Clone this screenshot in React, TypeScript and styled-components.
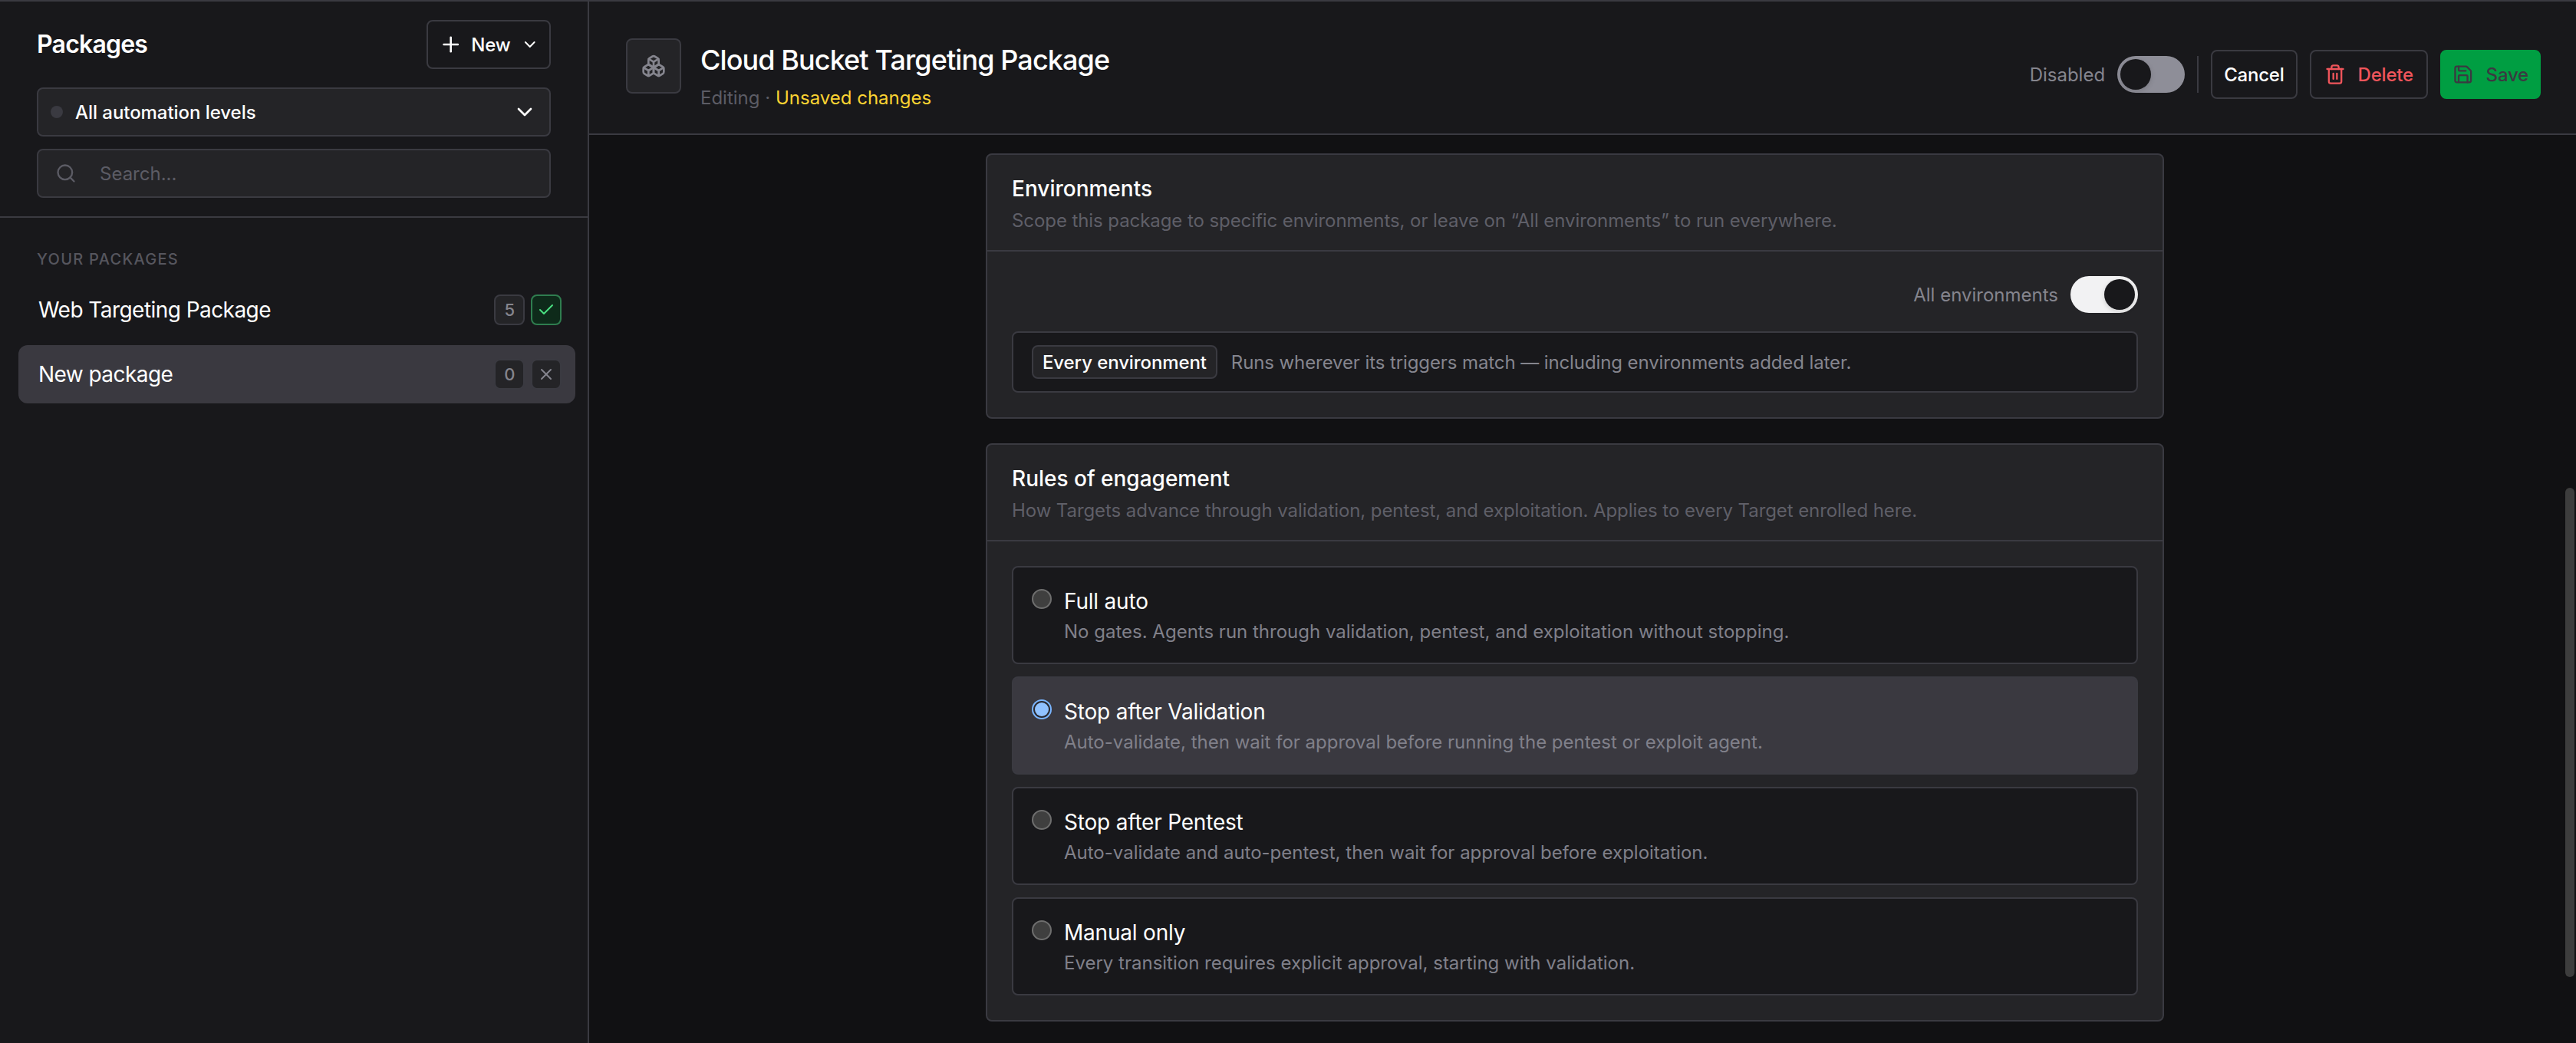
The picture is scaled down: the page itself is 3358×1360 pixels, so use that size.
import { Boxes, Check, ChevronDown, Plus, Save, Search, Trash2, X } from "lucide-react";
import styled, { createGlobalStyle } from "styled-components";

const GlobalStyle = createGlobalStyle`
    html, body {
        margin: 0;
        padding: 0;
        background: #111113;
    }
    * {
        box-sizing: border-box;
    }
    body {
        font-family: Inter, "Liberation Sans", sans-serif;
        color: #ffffff;
        -webkit-font-smoothing: antialiased;
    }
`;

const Shell = styled.div`
    display: flex;
    height: 100vh;
    border-top: 2px solid #3a3a41;
    overflow: hidden;
`;

const Sidebar = styled.aside`
    flex: 0 0 768px;
    background: #18181b;
    border-right: 2px solid #3a3a41;
`;

const SidebarHead = styled.div`
    display: flex;
    flex-direction: column;
    gap: 16px;
    padding: 24px 48px 24px;
    border-bottom: 2px solid #3a3a41;
`;

const TitleRow = styled.div`
    display: flex;
    align-items: center;
    justify-content: space-between;
    margin-bottom: 8px;
`;

const SidebarTitle = styled.h1`
    margin: 0;
    font-size: 32px;
    line-height: 40px;
    font-weight: 600;
    letter-spacing: -0.8px;
`;

const OutlineButton = styled.button<{ $tone?: string }>`
    display: inline-flex;
    align-items: center;
    height: 64px;
    padding: 0 15px;
    gap: 16px;
    background: transparent;
    border: 2px solid #3a3a41;
    border-radius: 8px;
    color: ${(p) => p.$tone ?? "#ffffff"};
    font-family: inherit;
    font-size: 24px;
    font-weight: 500;
    letter-spacing: -0.2px;
`;

const NewButton = styled(OutlineButton)`
    width: 162px;
    padding: 0 14px;
    gap: 0;
`;

const NewLabel = styled.span`
    margin: 0 13px 0 11px;
`;

const DeleteButton = styled(OutlineButton)`
    padding: 0 17px;
`;

const SelectBox = styled.div`
    display: flex;
    align-items: center;
    height: 64px;
    padding: 0 16px;
    background: #242427;
    border: 2px solid #3a3a41;
    border-radius: 8px;
    font-size: 24px;
    font-weight: 500;
    letter-spacing: -0.05px;
`;

const LevelDot = styled.span`
    width: 16px;
    height: 16px;
    margin-right: 16px;
    border-radius: 50%;
    background: #3a3a41;
`;

const SelectLabel = styled.span`
    flex: 1;
`;

const SearchBox = styled.div`
    display: flex;
    align-items: center;
    gap: 30px;
    height: 64px;
    padding: 0 22px;
    background: #242427;
    border: 2px solid #3a3a41;
    border-radius: 8px;
    color: #5c5c65;
    font-size: 24px;
`;

const PackageList = styled.div`
    display: flex;
    flex-direction: column;
    gap: 8px;
    padding: 38px 16px 0 24px;
`;

const ListHeading = styled.div`
    padding: 0 24px 4px;
    color: #56565e;
    font-size: 20px;
    line-height: 32px;
    font-weight: 500;
    letter-spacing: 1.3px;
    text-transform: uppercase;
`;

const PackageRow = styled.div<{ $active?: boolean }>`
    display: flex;
    align-items: center;
    height: 76px;
    padding: 0 18px 0 26px;
    border-radius: 12px;
    background: ${(p) => (p.$active ? "#3a3940" : "transparent")};
    font-size: 28px;
    font-weight: 400;
    letter-spacing: -0.55px;
`;

const PackageName = styled.span`
    flex: 1;
`;

const Chip = styled.span<{ $ok?: boolean }>`
    display: inline-flex;
    align-items: center;
    justify-content: center;
    width: 40px;
    height: 40px;
    margin-left: 8px;
    border-radius: 8px;
    border: 2px solid ${(p) => (p.$ok ? "#2f7d4f" : "#3a3a41")};
    background: ${(p) => (p.$ok ? "#0e2a1a" : "#242427")};
    color: ${(p) => (p.$ok ? "#4ade80" : "#85858e")};
    font-size: 22px;
    font-weight: 500;
`;

const Main = styled.main`
    flex: 1;
    position: relative;
    display: flex;
    flex-direction: column;
    min-width: 0;
`;

const Header = styled.header`
    display: flex;
    align-items: center;
    padding: 48px 46px 30px 48px;
    background: #18181b;
    border-bottom: 2px solid #3a3a41;
`;

const IconBox = styled.div`
    display: flex;
    align-items: center;
    justify-content: center;
    align-self: flex-start;
    width: 72px;
    height: 72px;
    border: 2px solid #3a3a41;
    border-radius: 8px;
    background: #242427;
    color: #85858e;
`;

const HeaderText = styled.div`
    flex: 1;
    margin-left: 25px;
`;

const PageTitle = styled.h2`
    margin: 0 0 6px;
    font-size: 36px;
    line-height: 56px;
    font-weight: 500;
    letter-spacing: -0.9px;
`;

const PageSub = styled.div`
    font-size: 24px;
    line-height: 32px;
    color: #5c5c65;
`;

const Unsaved = styled.span`
    color: #fbd332;
`;

const Actions = styled.div`
    display: flex;
    align-items: center;
    gap: 16px;
`;

const ToggleLabel = styled.span`
    color: #85858e;
    font-size: 24px;
`;

const Toggle = styled.span<{ $on?: boolean }>`
    display: flex;
    justify-content: ${(p) => (p.$on ? "flex-end" : "flex-start")};
    align-items: center;
    width: 88px;
    height: 48px;
    padding: 0 4px;
    border-radius: 24px;
    background: ${(p) => (p.$on ? "#f2f2f3" : "#8e8e98")};
`;

const ToggleThumb = styled.span`
    width: 40px;
    height: 40px;
    border-radius: 50%;
    background: #18181b;
    box-shadow: 0 2px 6px rgba(0, 0, 0, 0.15);
`;

const Divider = styled.span`
    width: 2px;
    height: 48px;
    background: #3a3a41;
`;

const SaveButton = styled(OutlineButton)`
    width: 131px;
    padding: 0 14px;
    background: #009e42;
    border-color: #009e42;
    color: #3a3a41;
`;

const Content = styled.div`
    flex: 1;
    display: flex;
    flex-direction: column;
    gap: 32px;
    padding: 24px 20px 0 0;
    align-items: center;
    overflow: hidden;
`;

const Card = styled.section`
    flex: none;
    width: 1536px;
    background: #242427;
    border: 2px solid #3a3a41;
    border-radius: 8px;
`;

const CardHead = styled.div`
    padding: 24px 32px 20px;
    border-bottom: 2px solid #3a3a41;
`;

const CardTitle = styled.h3`
    margin: 0 0 4px;
    font-size: 28px;
    line-height: 40px;
    font-weight: 500;
`;

const CardDesc = styled.p`
    margin: 0;
    color: #5f5f68;
    font-size: 24px;
    line-height: 36px;
    letter-spacing: -0.08px;
`;

const CardBody = styled.div`
    display: flex;
    flex-direction: column;
    padding: 32px;
`;

const ToggleRow = styled.div`
    display: flex;
    align-items: center;
    justify-content: flex-end;
    gap: 16px;
    margin-bottom: 24px;
`;

const Notice = styled.div`
    display: flex;
    align-items: center;
    gap: 18px;
    height: 80px;
    padding: 0 24px;
    background: #18181b;
    border: 2px solid #3a3a41;
    border-radius: 8px;
    color: #85858e;
    font-size: 24px;
    letter-spacing: -0.1px;
`;

const Pill = styled.span`
    display: inline-flex;
    align-items: center;
    height: 44px;
    padding: 0 12px;
    background: #242427;
    border: 2px solid #3a3a41;
    border-radius: 8px;
    color: #ffffff;
    font-weight: 500;
`;

const OptionList = styled.div`
    display: flex;
    flex-direction: column;
    gap: 16px;
`;

const Option = styled.div<{ $selected?: boolean }>`
    display: flex;
    height: 128px;
    padding: 24px;
    gap: 16px;
    background: ${(p) => (p.$selected ? "#3a3940" : "#18181b")};
    border: 2px solid #3a3a41;
    border-radius: 8px;
`;

const Radio = styled.span<{ $selected?: boolean }>`
    flex: none;
    display: flex;
    align-items: center;
    justify-content: center;
    width: 26px;
    height: 26px;
    margin-top: 4px;
    border-radius: 50%;
    border: 2px solid ${(p) => (p.$selected ? "#7ab5ff" : "#6e6e6e")};
    background: ${(p) => (p.$selected ? "#2a2a30" : "#3f3f3f")};
`;

const RadioDot = styled.span`
    width: 18px;
    height: 18px;
    border-radius: 50%;
    background: #90c2ff;
`;

const OptionTitle = styled.div`
    font-size: 28px;
    line-height: 40px;
    font-weight: 400;
    letter-spacing: -0.2px;
`;

const OptionDesc = styled.div`
    margin-top: 4px;
    color: #80808a;
    font-size: 24px;
    line-height: 32px;
`;

const ScrollThumb = styled.div`
    position: absolute;
    right: 2px;
    top: 634px;
    width: 12px;
    height: 638px;
    border-radius: 6px;
    background: #3d3d3d;
`;

const options = [
    {
        title: "Full auto",
        desc: "No gates. Agents run through validation, pentest, and exploitation without stopping.",
    },
    {
        title: "Stop after Validation",
        desc: "Auto-validate, then wait for approval before running the pentest or exploit agent.",
        selected: true,
    },
    {
        title: "Stop after Pentest",
        desc: "Auto-validate and auto-pentest, then wait for approval before exploitation.",
    },
    {
        title: "Manual only",
        desc: "Every transition requires explicit approval, starting with validation.",
    },
];

export default function App() {
    return (
        <>
            <GlobalStyle />
            <Shell>
                <Sidebar>
                    <SidebarHead>
                        <TitleRow>
                            <SidebarTitle>Packages</SidebarTitle>
                            <NewButton>
                                <Plus size={32} />
                                <NewLabel>New</NewLabel>
                                <ChevronDown size={24} />
                            </NewButton>
                        </TitleRow>
                        <SelectBox>
                            <LevelDot />
                            <SelectLabel>All automation levels</SelectLabel>
                            <ChevronDown size={32} />
                        </SelectBox>
                        <SearchBox>
                            <Search size={28} />
                            <span>Search...</span>
                        </SearchBox>
                    </SidebarHead>
                    <PackageList>
                        <ListHeading>Your packages</ListHeading>
                        <PackageRow>
                            <PackageName>Web Targeting Package</PackageName>
                            <Chip>5</Chip>
                            <Chip $ok>
                                <Check size={24} />
                            </Chip>
                        </PackageRow>
                        <PackageRow $active>
                            <PackageName>New package</PackageName>
                            <Chip>0</Chip>
                            <Chip>
                                <X size={24} />
                            </Chip>
                        </PackageRow>
                    </PackageList>
                </Sidebar>
                <Main>
                    <Header>
                        <IconBox>
                            <Boxes size={32} />
                        </IconBox>
                        <HeaderText>
                            <PageTitle>Cloud Bucket Targeting Package</PageTitle>
                            <PageSub>
                                Editing · <Unsaved>Unsaved changes</Unsaved>
                            </PageSub>
                        </HeaderText>
                        <Actions>
                            <ToggleLabel>Disabled</ToggleLabel>
                            <Toggle>
                                <ToggleThumb />
                            </Toggle>
                            <Divider />
                            <OutlineButton>Cancel</OutlineButton>
                            <DeleteButton $tone="#f0555b">
                                <Trash2 size={28} />
                                Delete
                            </DeleteButton>
                            <SaveButton>
                                <Save size={28} />
                                Save
                            </SaveButton>
                        </Actions>
                    </Header>
                    <Content>
                        <Card>
                            <CardHead>
                                <CardTitle>Environments</CardTitle>
                                <CardDesc>
                                    Scope this package to specific environments, or leave on “All environments” to run everywhere.
                                </CardDesc>
                            </CardHead>
                            <CardBody>
                                <ToggleRow>
                                    <ToggleLabel>All environments</ToggleLabel>
                                    <Toggle $on>
                                        <ToggleThumb />
                                    </Toggle>
                                </ToggleRow>
                                <Notice>
                                    <Pill>Every environment</Pill>
                                    Runs wherever its triggers match — including environments added later.
                                </Notice>
                            </CardBody>
                        </Card>
                        <Card>
                            <CardHead>
                                <CardTitle>Rules of engagement</CardTitle>
                                <CardDesc>
                                    How Targets advance through validation, pentest, and exploitation. Applies to every Target enrolled here.
                                </CardDesc>
                            </CardHead>
                            <CardBody>
                                <OptionList>
                                    {options.map((o) => (
                                        <Option key={o.title} $selected={o.selected}>
                                            <Radio $selected={o.selected}>{o.selected && <RadioDot />}</Radio>
                                            <div>
                                                <OptionTitle>{o.title}</OptionTitle>
                                                <OptionDesc>{o.desc}</OptionDesc>
                                            </div>
                                        </Option>
                                    ))}
                                </OptionList>
                            </CardBody>
                        </Card>
                    </Content>
                    <ScrollThumb />
                </Main>
            </Shell>
        </>
    );
}
